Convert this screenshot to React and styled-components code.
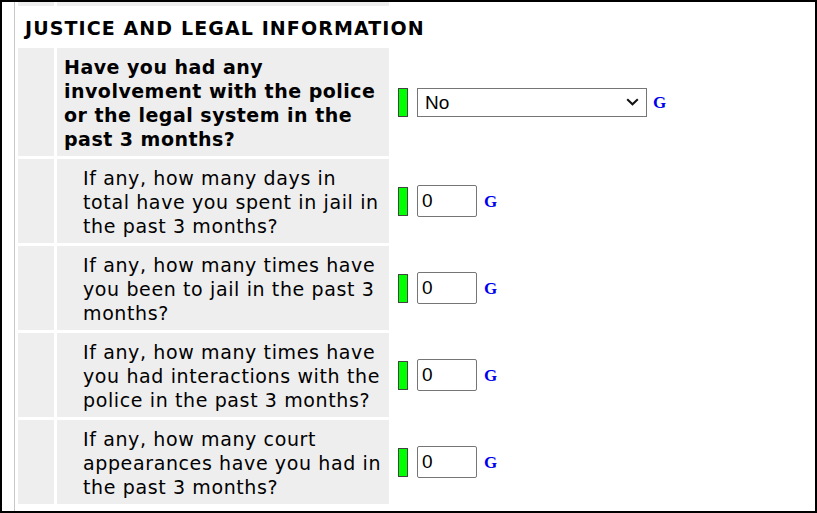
import React from "react";
import styled, { createGlobalStyle } from "styled-components";

const Global = createGlobalStyle`
  html, body { margin: 0; padding: 0; background: #fff; }
  body { font-family: "DejaVu Sans", Verdana, sans-serif; color: #000; }
`;

const Frame = styled.div`
  width: 817px;
  height: 513px;
  box-sizing: border-box;
  border: 2px solid #000;
  overflow: hidden;
  padding-left: 12px;
  background: #fff;
`;

const Section = styled.div`
  height: 100%;
  border-left: 1px solid #c8c8c8;
  padding-left: 3px;
  display: grid;
  grid-template-columns: 36px 332px 1fr;
  column-gap: 3px;
  row-gap: 3px;
  align-content: start;
`;

const Spacer = styled.div`
  background: ${(p) => (p.$blank ? "transparent" : "#eeeeee")};
  height: ${(p) => p.$h || "auto"};
`;

const Header = styled.div`
  grid-column: 1 / -1;
  height: 36px;
  box-sizing: border-box;
  padding-top: 2px;
  display: flex;
  align-items: center;
  padding-left: 7px;
  font-weight: bold;
  font-size: 19px;
  letter-spacing: 1.1px;
`;

const Question = styled.div`
  background: #eeeeee;
  padding: 7px 4px 5px ${(p) => (p.$main ? "7px" : "26px")};
  font-size: 19px;
  line-height: 24px;
  font-weight: ${(p) => (p.$main ? "bold" : "normal")};
  letter-spacing: ${(p) => (p.$main ? "0.48px" : "0.62px")};
`;

const Controls = styled.div`
  display: flex;
  align-items: center;
  padding-left: 6px;
`;

const Indicator = styled.span`
  display: inline-block;
  width: 8px;
  height: 27px;
  background: #00ff00;
  border: 1px solid #444;
  margin-right: 9px;
`;

const SelectWrap = styled.span`
  position: relative;
  display: inline-flex;
`;

const Select = styled.select`
  appearance: none;
  -webkit-appearance: none;
  width: 230px;
  height: 29px;
  box-sizing: border-box;
  font-family: "Liberation Sans", Arial, sans-serif;
  font-size: 19px;
  border: 1px solid #767676;
  border-radius: 0;
  background: #fff;
  padding: 0 0 0 7px;
  color: #000;
`;

const Chevron = styled.svg`
  position: absolute;
  right: 8px;
  top: 10px;
  width: 13px;
  height: 8px;
  pointer-events: none;
`;

const NumInput = styled.input`
  width: 60px;
  height: 32px;
  box-sizing: border-box;
  font-family: "Liberation Sans", Arial, sans-serif;
  font-size: 19px;
  border: 1px solid #767676;
  border-radius: 2px;
  padding: 0 0 0 4px;
  color: #000;
`;

const GLink = styled.a`
  font-family: "Liberation Serif", "Times New Roman", serif;
  font-weight: bold;
  font-size: 17px;
  color: #0000ee;
  text-decoration: none;
  margin-left: ${(p) => p.$gap || "6px"};
  padding-top: 1px;
`;

const questions = [
  "If any, how many days in total have you spent in jail in the past 3 months?",
  "If any, how many times have you been to jail in the past 3 months?",
  "If any, how many times have you had interactions with the police in the past 3 months?",
  "If any, how many court appearances have you had in the past 3 months?",
];

export default function App() {
  return (
    <>
      <Global />
      <Frame>
        <Section>
          <Spacer $h="4px" />
          <Spacer $h="4px" />
          <Spacer $blank $h="4px" />
          <Header>JUSTICE AND LEGAL INFORMATION</Header>

          <Spacer />
          <Question $main>
            Have you had any involvement with the police or the legal system in
            the past 3 months?
          </Question>
          <Controls>
            <Indicator />
            <SelectWrap>
              <Select defaultValue="No">
                <option>No</option>
                <option>Yes</option>
              </Select>
              <Chevron viewBox="0 0 13 8">
                <path d="M1.2 1.2 L6.5 6.3 L11.8 1.2" fill="none" stroke="#111" strokeWidth="2" />
              </Chevron>
            </SelectWrap>
            <GLink href="#">G</GLink>
          </Controls>

          {questions.map((q) => (
            <React.Fragment key={q}>
              <Spacer />
              <Question>{q}</Question>
              <Controls>
                <Indicator />
                <NumInput defaultValue="0" />
                <GLink href="#" $gap="7px">G</GLink>
              </Controls>
            </React.Fragment>
          ))}
        </Section>
      </Frame>
    </>
  );
}
